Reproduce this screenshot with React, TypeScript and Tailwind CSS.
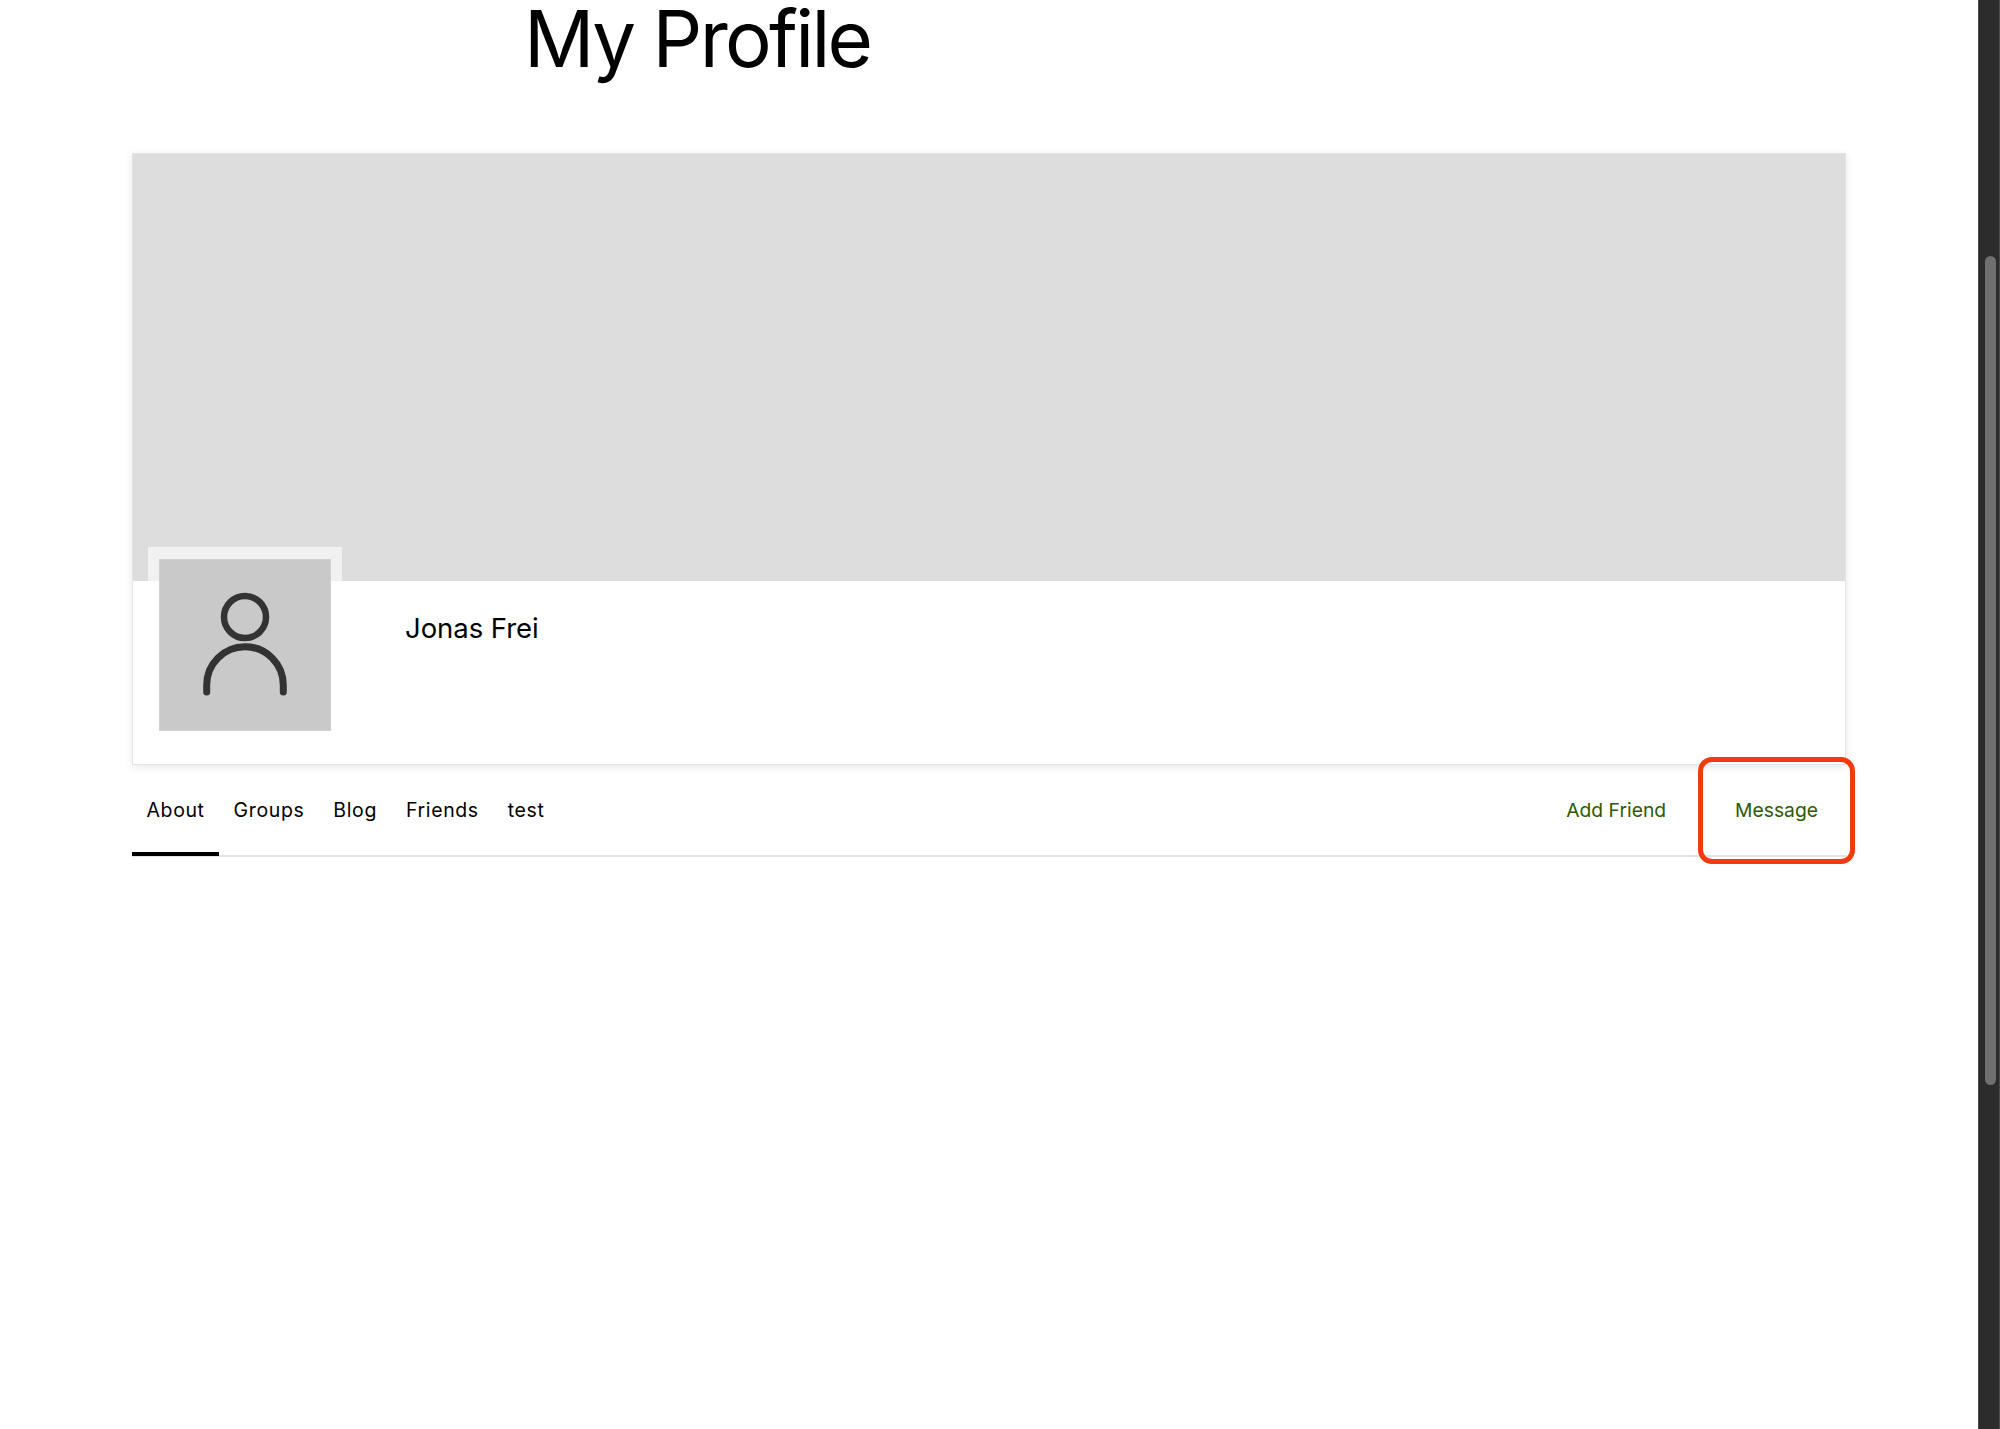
export default function App() {
  const tabs = [
    { label: "About", active: true },
    { label: "Groups" },
    { label: "Blog" },
    { label: "Friends" },
    { label: "test" },
  ];
  return (
    <div className="relative flex h-[1429px] w-full overflow-hidden bg-white font-['Inter','Liberation_Sans',sans-serif] text-black">
      <main className="min-w-0 flex-1 pl-[132px] pr-[132px]">
        <h1 className="h-[153px] pl-[392px] text-[78px] font-normal leading-[78px] tracking-[-2.7px]">My Profile</h1>
        <section className="border border-[#e4e4e4] bg-white shadow-[0_2px_8px_rgba(0,0,0,0.1)]">
          <div className="h-[427px] bg-[#dddddd]" />
          <div className="flex h-[183px] items-start pl-[15px]">
            <div className="-mt-[34px] bg-white/60 p-[11px] pt-[12px]">
              <div className="flex h-[172px] w-[172px] items-center justify-center border border-[#d0d0d0] bg-[#c9c9c9]">
                <svg width="172" height="172" viewBox="0 0 172 172" fill="none" stroke="#333333" strokeLinecap="round" className="shrink-0">
                  <circle cx="86" cy="58" r="21" strokeWidth="6.5" />
                  <path d="M47.7 133V126a38.3 38.3 0 0 1 76.6 0V133" strokeWidth="7" />
                </svg>
              </div>
            </div>
            <div className="ml-[63px] pt-[28px] text-[27.5px] leading-[38px] tracking-[-0.05px]">Jonas Frei</div>
          </div>
        </section>
        <nav className="flex h-[92px] items-stretch justify-between border-b-2 border-[#e4e4e4] text-[19.5px]">
          <div className="flex">
            {tabs.map((t) => (
              <a
                key={t.label}
                className={`-mb-[1px] flex items-center border-b-[4px] pl-[14.5px] pr-[14.5px] pt-[5px] tracking-[0.62px] ${t.active ? "border-black" : "border-transparent"}`}
              >
                {t.label}
              </a>
            ))}
          </div>
          <div className="flex items-center gap-[69px] pr-[28px] pt-[1px] text-[19.3px] text-[#2d5a00]">
            <a>Add Friend</a>
            <a>Message</a>
          </div>
        </nav>
      </main>
      <aside className="flex w-[22px] shrink-0 flex-col border-x border-[#4a4a4a] bg-[#2c2c2c] px-[6px] pt-[256px]">
        <div className="h-[829px] w-[11px] rounded-full bg-[#6f6f6f]" />
      </aside>
      <div className="absolute left-[1698px] top-[757px] h-[107px] w-[157px] rounded-[14px] border-[5px] border-[#f03a10]" />
    </div>
  );
}
